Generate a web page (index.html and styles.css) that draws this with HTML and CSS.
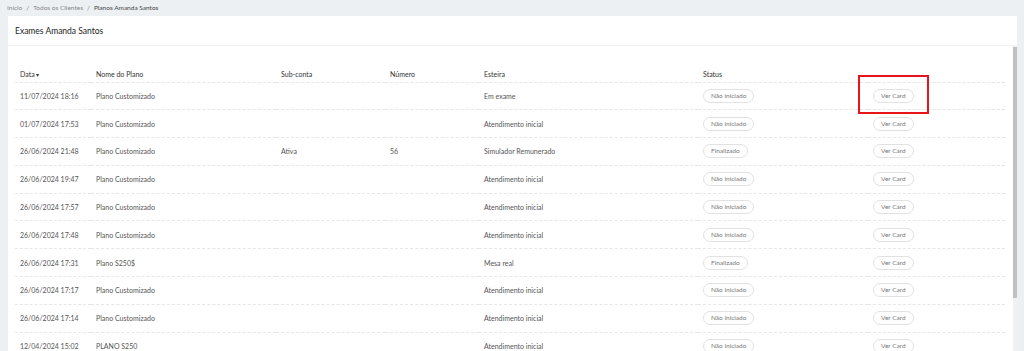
FILE: index.html
```html
<!DOCTYPE html>
<html lang="pt-BR">
<head>
    <meta charset="UTF-8">
    <meta name="viewport" content="width=device-width, initial-scale=1.0">
    <title>Planos Amanda Santos</title>
    <link rel="stylesheet" href="styles.css">
</head>
<body>
    <div class="page">
        <nav class="breadcrumb">
            <a href="#">Início</a>
            <span class="sep">/</span>
            <a href="#">Todos os Clientes</a>
            <span class="sep">/</span>
            <span class="current">Planos Amanda Santos</span>
        </nav>

        <div class="card">
            <div class="card-header">Exames Amanda Santos</div>
            <div class="card-body">
                <div class="table-wrap">
                    <table class="plans">
                        <colgroup>
                            <col style="width: 76px">
                            <col style="width: 185px">
                            <col style="width: 109px">
                            <col style="width: 94px">
                            <col style="width: 219px">
                            <col style="width: 170px">
                            <col style="width: 137px">
                        </colgroup>
                        <thead>
                            <tr>
                                <th>Data <span class="caret">&#9662;</span></th>
                                <th>Nome do Plano</th>
                                <th>Sub-conta</th>
                                <th>Número</th>
                                <th>Esteira</th>
                                <th>Status</th>
                                <th></th>
                            </tr>
                        </thead>
                        <tbody>
                            <tr>
                                <td>11/07/2024 18:16</td>
                                <td>Plano Customizado</td>
                                <td></td>
                                <td></td>
                                <td>Em exame</td>
                                <td><span class="pill">Não iniciado</span></td>
                                <td><span class="highlight-wrap"><button class="pill btn">Ver Card</button><span class="highlight"></span></span></td>
                            </tr>
                            <tr>
                                <td>01/07/2024 17:53</td>
                                <td>Plano Customizado</td>
                                <td></td>
                                <td></td>
                                <td>Atendimento inicial</td>
                                <td><span class="pill">Não iniciado</span></td>
                                <td><button class="pill btn">Ver Card</button></td>
                            </tr>
                            <tr>
                                <td>26/06/2024 21:48</td>
                                <td>Plano Customizado</td>
                                <td>Ativa</td>
                                <td>56</td>
                                <td>Simulador Remunerado</td>
                                <td><span class="pill">Finalizado</span></td>
                                <td><button class="pill btn">Ver Card</button></td>
                            </tr>
                            <tr>
                                <td>26/06/2024 19:47</td>
                                <td>Plano Customizado</td>
                                <td></td>
                                <td></td>
                                <td>Atendimento inicial</td>
                                <td><span class="pill">Não iniciado</span></td>
                                <td><button class="pill btn">Ver Card</button></td>
                            </tr>
                            <tr>
                                <td>26/06/2024 17:57</td>
                                <td>Plano Customizado</td>
                                <td></td>
                                <td></td>
                                <td>Atendimento inicial</td>
                                <td><span class="pill">Não iniciado</span></td>
                                <td><button class="pill btn">Ver Card</button></td>
                            </tr>
                            <tr>
                                <td>26/06/2024 17:48</td>
                                <td>Plano Customizado</td>
                                <td></td>
                                <td></td>
                                <td>Atendimento inicial</td>
                                <td><span class="pill">Não iniciado</span></td>
                                <td><button class="pill btn">Ver Card</button></td>
                            </tr>
                            <tr>
                                <td>26/06/2024 17:31</td>
                                <td>Plano S250$</td>
                                <td></td>
                                <td></td>
                                <td>Mesa real</td>
                                <td><span class="pill">Finalizado</span></td>
                                <td><button class="pill btn">Ver Card</button></td>
                            </tr>
                            <tr>
                                <td>26/06/2024 17:17</td>
                                <td>Plano Customizado</td>
                                <td></td>
                                <td></td>
                                <td>Atendimento inicial</td>
                                <td><span class="pill">Não iniciado</span></td>
                                <td><button class="pill btn">Ver Card</button></td>
                            </tr>
                            <tr>
                                <td>26/06/2024 17:14</td>
                                <td>Plano Customizado</td>
                                <td></td>
                                <td></td>
                                <td>Atendimento inicial</td>
                                <td><span class="pill">Não iniciado</span></td>
                                <td><button class="pill btn">Ver Card</button></td>
                            </tr>
                            <tr>
                                <td>12/04/2024 15:02</td>
                                <td>PLANO S250</td>
                                <td></td>
                                <td></td>
                                <td>Atendimento inicial</td>
                                <td><span class="pill">Não iniciado</span></td>
                                <td><button class="pill btn">Ver Card</button></td>
                            </tr>
                        </tbody>
                    </table>
                </div>
                <div class="scrollbar"><div class="thumb"></div></div>
            </div>
        </div>
    </div>
</body>
</html>
```

FILE: styles.css
```css
* {
    box-sizing: border-box;
    margin: 0;
    padding: 0;
}

html, body {
    height: 100%;
    overflow: hidden;
}

body {
    font-family: Lato, "Noto Sans", sans-serif;
    background: #ecf0f3;
    color: #333;
}

.page {
    height: 100vh;
    display: flex;
    flex-direction: column;
    padding: 0 7px 0 8px;
}

.breadcrumb {
    height: 14px;
    display: flex;
    align-items: center;
    gap: 4px;
    font-size: 6.5px;
    color: #777;
    margin-left: -1px;
    margin-bottom: 2px;
}

.breadcrumb a {
    color: #888;
    text-decoration: none;
}

.breadcrumb .current {
    color: #444;
}

.card {
    flex: 1;
    min-height: 0;
    background: #fff;
    display: flex;
    flex-direction: column;
}

.card-header {
    height: 30px;
    flex-shrink: 0;
    display: flex;
    align-items: center;
    padding: 0 7px;
    font-size: 8.5px;
    color: #222;
    border-bottom: 1px solid #f2f2f2;
}

.card-body {
    flex: 1;
    min-height: 0;
    display: flex;
}

.table-wrap {
    flex: 1;
    min-width: 0;
    overflow: hidden;
    padding: 20px 8px 0 7px;
}

.scrollbar {
    width: 4px;
    flex-shrink: 0;
    background: #f1f1f1;
    padding-top: 1px;
}

.scrollbar .thumb {
    height: 251px;
    background: #c1c1c1;
}

.plans {
    width: 990px;
    table-layout: fixed;
    border-collapse: collapse;
    font-size: 7px;
}

.plans th {
    height: 16px;
    text-align: left;
    font-weight: normal;
    color: #333;
    padding: 0 5px;
    border-bottom: 1px dashed #e6e6e6;
}

.plans .caret {
    font-size: 6px;
}

.plans td {
    height: 27.8px;
    padding: 0 5px;
    color: #555;
    border-bottom: 1px dashed #e6e6e6;
    white-space: nowrap;
}

.pill {
    display: inline-block;
    height: 14px;
    line-height: 12px;
    padding: 0 7px;
    border: 1px solid #e2e2e2;
    border-radius: 7px;
    background: #fff;
    color: #777;
    font-family: inherit;
    font-size: 6.5px;
}

.btn {
    cursor: pointer;
}

.highlight-wrap {
    position: relative;
    display: inline-block;
}

.highlight {
    position: absolute;
    left: -15px;
    top: -14px;
    width: 71px;
    height: 39px;
    border: 2px solid #e8141c;
}
```
